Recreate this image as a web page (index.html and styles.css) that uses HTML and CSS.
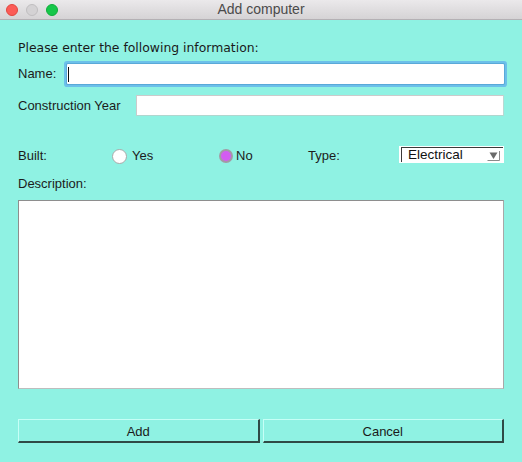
FILE: index.html
```html
<!DOCTYPE html>
<html>
<head>
<meta charset="utf-8">
<title>Add computer</title>
<link rel="stylesheet" href="styles.css">
</head>
<body>
<div class="window">
  <header class="titlebar">
    <div class="lights">
      <span class="light red"></span>
      <span class="light gray"></span>
      <span class="light green"></span>
    </div>
    <div class="title">Add computer</div>
  </header>
  <main class="form">
    <p class="intro">Please enter the following information:</p>
    <div class="row row-name">
      <label class="lbl lbl-name">Name:</label>
      <div class="input input-focus"><span class="caret"></span></div>
    </div>
    <div class="row row-year">
      <label class="lbl lbl-year">Construction Year</label>
      <div class="input"></div>
    </div>
    <div class="row row-opts">
      <span class="lbl lbl-built">Built:</span>
      <span class="opt opt-yes"><span class="radio"></span><span class="opt-text">Yes</span></span>
      <span class="opt opt-no"><span class="radio checked"></span><span class="opt-text">No</span></span>
      <span class="lbl lbl-type">Type:</span>
      <div class="select">
        <div class="select-inner">
          <span class="select-text">Electrical</span>
          <svg class="arrow" width="13" height="10" viewBox="0 0 13 10">
            <path d="M2.5 1.5 L10.5 1.5 L6.5 8 Z" fill="#6a6a6a"/>
            <path d="M0.5 9.5 H12.5 V0" stroke="#8a8a8a" stroke-width="1" fill="none"/>
          </svg>
        </div>
      </div>
    </div>
    <label class="lbl lbl-desc">Description:</label>
    <div class="textarea"></div>
    <div class="buttons">
      <button class="btn">Add</button>
      <button class="btn">Cancel</button>
    </div>
  </main>
</div>
</body>
</html>
```

FILE: styles.css
```css
html, body {
  margin: 0;
  padding: 0;
}
body {
  background: #8ff2e3;
  font-family: "Liberation Sans", Arial, sans-serif;
  font-size: 13px;
  color: #1c1c1c;
}
.window {
  width: 522px;
  height: 462px;
  overflow: hidden;
}
.titlebar {
  height: 19px;
  border-bottom: 1px solid #b4b0b4;
  background: linear-gradient(#ebe9eb, #d5d3d5);
  display: flex;
  align-items: center;
  position: relative;
}
.lights {
  display: flex;
  gap: 8px;
  padding-left: 6px;
}
.light {
  width: 12px;
  height: 12px;
  border-radius: 50%;
  box-sizing: border-box;
}
.red { background: #fc5b57; border: 1px solid #e2463f; }
.gray { background: #d4d2d4; border: 1px solid #c0bec0; }
.green { background: #16c74a; border: 1px solid #10ae3b; }
.title {
  position: absolute;
  left: 0;
  right: 0;
  text-align: center;
  font-size: 14px;
  color: #4b4b4b;
  line-height: 19px;
}
.form {
  padding: 20px 18px 0 18px;
  display: flex;
  flex-direction: column;
}
.intro {
  margin: 0;
  height: 16px;
  line-height: 16px;
  font-family: "DejaVu Sans", sans-serif;
  font-size: 12.4px;
  color: #1a1a1a;
}
.row {
  display: flex;
  align-items: center;
}
.lbl {
  line-height: 16px;
  flex: none;
}
.row-name { margin-top: 8px; height: 20px; }
.lbl-name { width: 49px; }
.input {
  flex: 1;
  background: #fff;
  box-sizing: border-box;
}
.input-focus {
  height: 20px;
  border-radius: 1px;
  box-shadow: 0 0 0 1px #5aa9d8, 0 0 0 3px #6cc0ea;
  display: flex;
  align-items: center;
}
.caret {
  width: 1px;
  height: 15px;
  background: #111;
  margin-left: 1px;
}
.row-year { margin-top: 11px; height: 21px; }
.lbl-year { width: 118px; }
.row-year .input {
  height: 21px;
  border: 1px solid #cbcbcb;
  border-right-color: #b9d9d3;
  border-bottom-color: #b0d6cf;
}
.row-opts { margin-top: 30px; height: 17px; }
.lbl-built { width: 94px; margin-top: 2px; }
.opt {
  display: flex;
  align-items: center;
  flex: none;
}
.opt-yes { width: 107px; }
.opt-no { width: 89px; }
.radio {
  width: 15px;
  height: 15px;
  box-sizing: border-box;
  border-radius: 50%;
  background: #fff;
  border: 1px solid #a9a9a9;
  margin-top: 3px;
}
.opt-yes .opt-text { margin-left: 5px; }
.radio.checked {
  width: 14px;
  height: 14px;
  background: #d35cf2;
  border: 2px solid #a39aa6;
}
.opt-no .opt-text { margin-left: 3px; }
.opt-text { line-height: 16px; margin-top: 3px; }
.lbl-type { width: 91px; margin-top: 2px; }
.select {
  flex: 1;
  height: 17px;
  background: #fff;
  box-sizing: border-box;
  padding: 1px 1px 1px 2px;
}
.select-inner {
  height: 15px;
  box-sizing: border-box;
  border-left: 1px solid #3a3a3a;
  border-top: 1px solid #3a3a3a;
  display: flex;
  align-items: center;
  justify-content: space-between;
  padding-left: 6px;
  padding-right: 3px;
}
.select-text {
  line-height: 14px;
  font-size: 13.5px;
  color: #111;
}
.arrow {
  display: block;
  margin-top: 2px;
}
.lbl-desc {
  margin-top: 13px;
  height: 16px;
}
.textarea {
  margin-top: 8px;
  height: 189px;
  background: #fff;
  box-sizing: border-box;
  border: 1px solid #a8a8a8;
  border-top-color: #8e8e8e;
  border-left-color: #8e8e8e;
  border-bottom-color: #bdbdbd;
}
.buttons {
  margin-top: 30px;
  display: grid;
  grid-template-columns: 1fr 1fr;
  gap: 3px;
}
.btn {
  height: 24px;
  box-sizing: border-box;
  background: #8ff2e3;
  border-style: solid;
  border-width: 1px 2px 2px 1px;
  border-color: #c6fff6 #2f4a46 #2f4a46 #c6fff6;
  font-family: "Liberation Sans", Arial, sans-serif;
  font-size: 13px;
  color: #1a1a1a;
  padding: 2px 0 0 0;
  margin: 0;
  line-height: 19px;
}
```
